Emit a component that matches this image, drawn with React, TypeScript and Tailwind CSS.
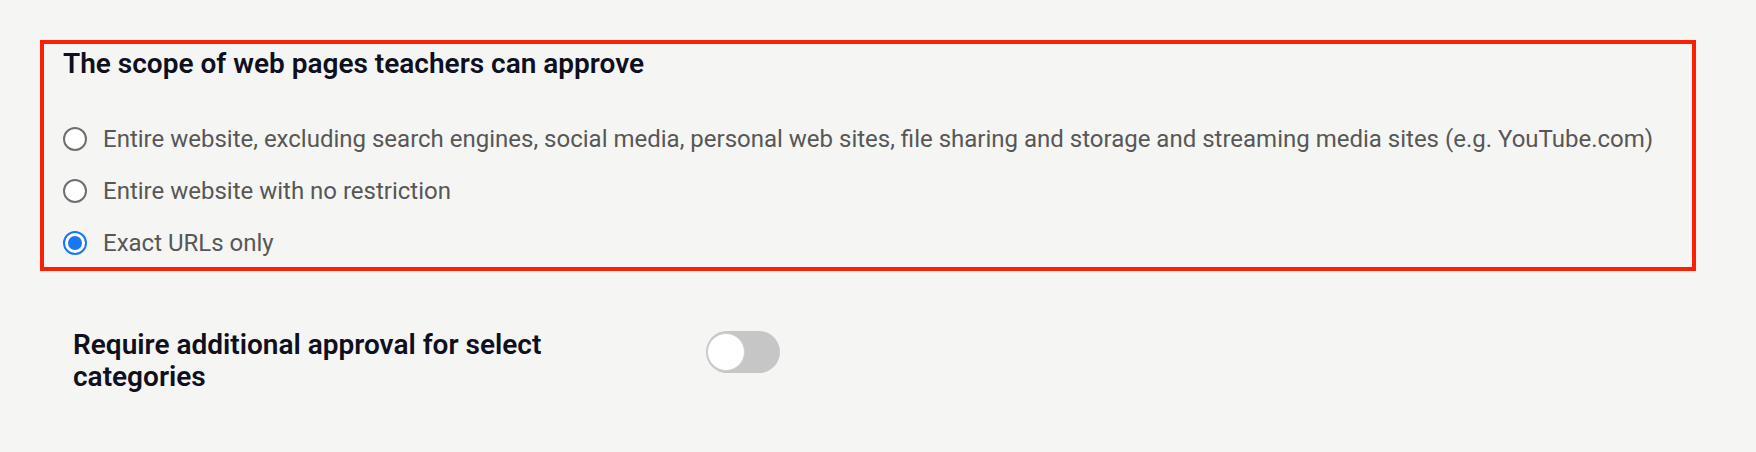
import { useState } from 'react'

const options = [
  'Entire website, excluding search engines, social media, personal web sites, file sharing and storage and streaming media sites (e.g. YouTube.com)',
  'Entire website with no restriction',
  'Exact URLs only',
]

export default function App() {
  const [scope, setScope] = useState(2)
  const [extra, setExtra] = useState(false)

  return (
    <div className="min-h-screen bg-[#f5f5f3] pt-[40px] font-['Roboto',sans-serif]">
      <div className="ml-[40px] w-[1656px] h-[231px] border-4 border-[#fd1f03] pl-[19px] pt-[4px]">
        <h2 className="text-[28px] leading-[32px] font-semibold text-[#0f0f1e]">
          The scope of web pages teachers can approve
        </h2>
        <div className="mt-[39px] flex flex-col gap-[12px]">
          {options.map((label, i) => (
            <RadioRow key={i} label={label} checked={scope === i} onClick={() => setScope(i)} />
          ))}
        </div>
      </div>

      <div className="mt-[60px] pl-[73px] flex items-start">
        <p className="w-[540px] mr-[93px] -mt-[2px] text-[28px] leading-[32px] font-semibold text-[#0f0f1e]">
          Require additional approval for select categories
        </p>
        <Toggle on={extra} onClick={() => setExtra(!extra)} />
      </div>
    </div>
  )
}

function RadioRow({ label, checked, onClick }: { label: string; checked: boolean; onClick: () => void }) {
  return (
    <button onClick={onClick} className="flex items-center h-[40px] text-left">
      <span
        className={`w-[24px] h-[24px] rounded-full border-2 bg-white flex items-center justify-center shrink-0 ${
          checked ? 'border-[#1877f2]' : 'border-[#6f6f6f]'
        }`}
      >
        {checked && <span className="w-[14px] h-[14px] rounded-full bg-[#1877f2]" />}
      </span>
      <span className="ml-[16px] text-[24px] leading-[32px] text-[#575757]">{label}</span>
    </button>
  )
}

function Toggle({ on, onClick }: { on: boolean; onClick: () => void }) {
  return (
    <button
      onClick={onClick}
      className={`relative w-[74px] h-[42px] rounded-full ${on ? 'bg-[#1877f2]' : 'bg-[#c6c6c6]'}`}
    >
      <span
        className={`absolute top-[2px] w-[38px] h-[38px] rounded-full bg-white border border-[#d0d0d0] ${
          on ? 'left-[34px]' : 'left-[1px]'
        }`}
      />
    </button>
  )
}
